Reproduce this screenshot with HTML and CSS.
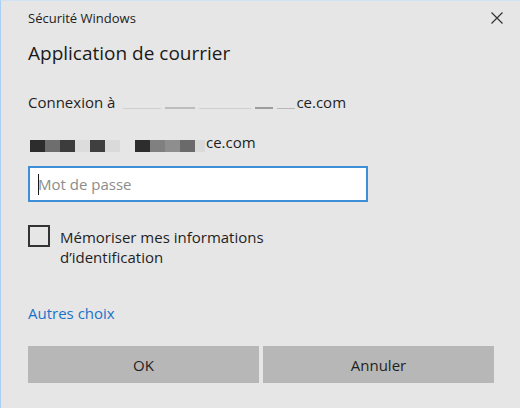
FILE: index.html
```html
<!DOCTYPE html>
<html lang="fr">
  <head>
    <meta charset="UTF-8" />
    <meta name="viewport" content="width=device-width, initial-scale=1.0" />
    <title>Sécurité Windows</title>
    <link rel="stylesheet" href="styles.css">
  </head>
  <body>
    <div class="dialog">
      <header class="titlebar">
        <span class="app-title">Sécurité Windows</span>
        <button class="close" aria-label="Fermer">
          <svg width="12" height="12" viewBox="0 0 12 12">
            <path d="M0.5 0.5 L11.5 11.5 M11.5 0.5 L0.5 11.5" stroke="#333" stroke-width="1.2" fill="none" />
          </svg>
        </button>
      </header>
      <h1 class="heading">Application de courrier</h1>
      <p class="connect">
        Connexion à
        <span class="smudge">
          <i class="s1"></i><i class="s2"></i><i class="s3"></i><i class="s4"></i><i class="s5"></i>
        </span>ce.com
      </p>
      <p class="account">
        <span class="pixels">
          <i class="p1"></i><i class="p2"></i><i class="p3"></i><i class="p4"></i><i class="p5"></i><i class="p6"></i><i class="p0"></i><i class="p1"></i><i class="p7"></i><i class="p8"></i><i class="p9"></i><i class="p6 tail"></i>
        </span>
        <span>ce.com</span>
      </p>
      <div class="field">
        <span class="caret"></span>
        <input type="password" placeholder="Mot de passe" />
      </div>
      <label class="remember">
        <span class="box"></span>
        <span class="remember-text">Mémoriser mes informations<br />d’identification</span>
      </label>
      <a class="more" href="#">Autres choix</a>
      <div class="actions">
        <button class="btn">OK</button>
        <button class="btn">Annuler</button>
      </div>
    </div>
  </body>
</html>
```

FILE: styles.css
```css
* {
  box-sizing: border-box;
  font-family: "Open Sans", "Noto Sans", sans-serif;
}
html,
body {
  margin: 0;
  height: 100%;
}
body {
  background-color: #e6e6e6;
  color: #1f1f1f;
}
.dialog {
  height: 100%;
  padding: 0 26px 0 27px;
  border-left: 1px solid #a9cff2;
  border-top: 1px solid #cfe3f5;
}
.titlebar {
  display: flex;
  justify-content: space-between;
  align-items: center;
  height: 26px;
  padding-top: 7px;
}
.app-title {
  font-size: 13px;
  line-height: 18px;
  color: #222;
}
.close {
  border: none;
  background: none;
  padding: 0;
  margin-right: -9px;
  height: 12px;
  display: flex;
}
.heading {
  margin: 11px 0 0;
  font-size: 19px;
  font-weight: normal;
  line-height: 30px;
  color: #1a1a1a;
}
.connect {
  margin: 24px 0 0;
  font-size: 15px;
  line-height: 20px;
  display: flex;
  align-items: center;
}
.smudge {
  display: flex;
  align-items: flex-end;
  gap: 4px;
  height: 14px;
  margin: 0 1px 0 8px;
}
.smudge i {
  display: block;
  height: 1px;
  background-color: #cfcfcf;
}
.s1 { width: 38px; }
.s2 { width: 30px; height: 2px !important; background-color: #bdbdbd !important; }
.s3 { width: 52px; }
.s4 { width: 18px; height: 2px !important; background-color: #9d9d9d !important; }
.s5 { width: 18px; background-color: #b8b8b8 !important; }
.account {
  margin: 20px 0 0 2px;
  font-size: 15px;
  line-height: 20px;
  display: flex;
  align-items: center;
}
.pixels {
  display: flex;
  margin: 8px 1px 0 0;
}
.pixels i {
  display: block;
  width: 15px;
  height: 12px;
}
.pixels .tail {
  width: 10px;
}
.p0 { background-color: #e6e6e6; }
.p1 { background-color: #2d2d2d; }
.p2 { background-color: #6e6e6e; }
.p3 { background-color: #3c3c3c; }
.p4 { background-color: #dcdcdc; }
.p5 { background-color: #3f3f3f; }
.p6 { background-color: #dadada; }
.p7 { background-color: #808080; }
.p8 { background-color: #8e8e8e; }
.p9 { background-color: #6a6a6a; }
.field {
  position: relative;
  margin-top: 14px;
  width: 340px;
  height: 36px;
  border: 2px solid #3f8fd8;
  background-color: #fff;
}
.field input {
  width: 100%;
  height: 100%;
  border: none;
  outline: none;
  padding: 0 8px;
  font-size: 15px;
  background: transparent;
}
.field input::placeholder {
  color: #8c8c8c;
}
.caret {
  position: absolute;
  left: 8px;
  top: 6px;
  width: 1px;
  height: 21px;
  background-color: #1a1a1a;
}
.remember {
  display: flex;
  gap: 10px;
  margin-top: 23px;
  font-size: 15px;
  line-height: 20px;
}
.box {
  flex: none;
  width: 22px;
  height: 22px;
  border: 2px solid #333;
}
.remember-text {
  margin-top: 2px;
}
.more {
  display: block;
  margin-top: 36px;
  font-size: 15px;
  line-height: 20px;
  color: #1a73c8;
  text-decoration: none;
}
.actions {
  display: grid;
  grid-template-columns: 1fr 1fr;
  gap: 4px;
  margin-top: 23px;
}
.btn {
  height: 37px;
  border: none;
  background-color: #b7b7b7;
  font-size: 15px;
  color: #1f1f1f;
}
```
